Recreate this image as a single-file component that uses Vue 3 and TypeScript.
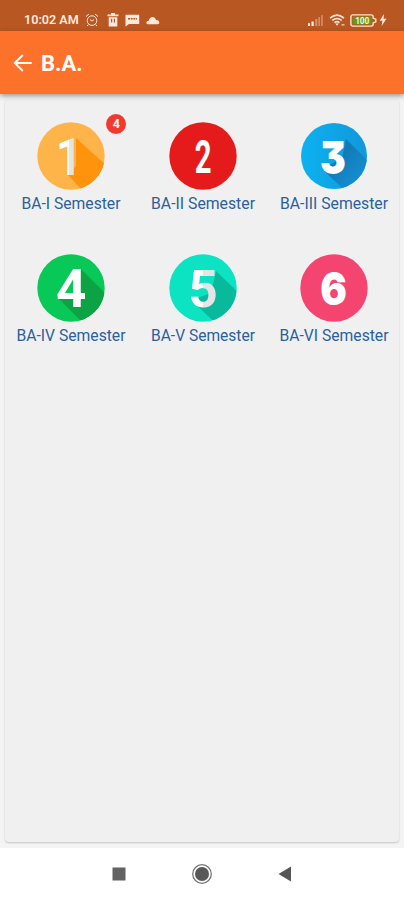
<script setup lang="ts">
interface Semester {
  digit: number
  label: string
  labelWidth: number
  color: string
  edge: string
  shade?: string
  shadow?: string
  size: number
  stretch: number
  x: number
  y: number
  font: string
  face?: string
  badge?: number
}

const semesters: Semester[] = [
  { digit: 1, label: 'BA-I Semester', labelWidth: 99, color: '#ffb44a', edge: '#ffb44a', shade: '#ff930c', shadow: 'M39 16L80 53L55 79L31 53L39 44Z', size: 52, stretch: 0.88, x: 31.8, y: 52.7, font: 'roboto', face: '#e5e4e3', badge: 4 },
  { digit: 2, label: 'BA-II Semester', labelWidth: 104, color: '#e51a1b', edge: '#e51a1b', size: 46.5, stretch: 0.63, x: 34.2, y: 50.8, font: 'roboto' },
  { digit: 3, label: 'BA-III Semester', labelWidth: 108, color: '#0cb2f0', edge: '#1297da', shade: '#1479b7', shadow: 'M46 17L78 49L54 77L22 47L42 36Z', size: 46, stretch: 0.84, x: 33, y: 51.5, font: 'inter' },
  { digit: 4, label: 'BA-IV Semester', labelWidth: 109, color: '#08c957', edge: '#08c957', shade: '#0ba344', shadow: 'M44 15L78 49L56 79L20 43L43 43Z', size: 53, stretch: 1, x: 34.3, y: 53, font: 'roboto' },
  { digit: 5, label: 'BA-V Semester', labelWidth: 104, color: '#0ce3c2', edge: '#0ce3c2', shade: '#08b99b', shadow: 'M47 17L79 48L57 79L22 46L42 39Z', size: 52, stretch: 0.98, x: 34, y: 52.5, font: 'roboto', face: '#e5e5e6' },
  { digit: 6, label: 'BA-VI Semester', labelWidth: 109, color: '#f3456f', edge: '#f3456f', size: 45, stretch: 0.88, x: 33.5, y: 51, font: 'inter' },
]
</script>

<template>
  <div class="screen">
    <header class="status">
      <div class="status-left">
        <span class="time">10:02 AM</span>
        <svg class="alarm" width="14" height="14" viewBox="0 0 14 14" fill="none" stroke="currentColor">
          <circle cx="7" cy="7.6" r="4.8" />
          <path d="M1 3.5L4 1M13 3.5L10 1M5 6.6L7 8.1L9 6.6M3.4 11.5L2.2 13M10.6 11.5L11.8 13" />
        </svg>
        <svg class="trash" width="12" height="14" viewBox="0 0 12 14" fill="currentColor">
          <path d="M4 0H8V1.5H11.5V3.3H.5V1.5H4ZM1.7 4.2H10.3V13.4H1.7ZM4 5.8V9.5H5.2V5.8ZM6.8 5.8V9.5H8V5.8Z" fill-rule="evenodd" />
        </svg>
        <svg class="chat" width="15" height="13" viewBox="0 0 15 13">
          <path d="M.5.8H14.2V10H4L.5 12.5Z" fill="currentColor" />
          <path d="M3 4.8H12" stroke="#b95722" stroke-width="1.4" stroke-dasharray="2 .7" />
        </svg>
        <svg class="cloud" width="14" height="9" viewBox="0 0 14 9">
          <path d="M2.5 8.3C-.5 8.3-.2 4.8 2.8 4.8C3.2.3 8.8-.7 10 4C13.8 3.8 14.5 8.3 11.5 8.3Z" fill="currentColor" />
        </svg>
      </div>
      <div class="status-right">
        <svg width="17" height="13" viewBox="0 0 17 13" fill="currentColor">
          <path d="M1 9.3H3V12H1ZM4.5 7.5H6.7V12H4.5Z" />
          <path d="M8.2 5H10.3V12H8.2ZM11.4 3H13V12H11.4ZM14.2 1H15.8V12H14.2Z" opacity=".38" />
        </svg>
        <svg class="wifi" width="17" height="13" viewBox="0 0 17 13" fill="none" stroke="currentColor">
          <path d="M1 4.1Q8-1.7 15 4.1M3.3 6.4Q8 2.6 12.7 6.4M5.5 8.6Q8 6.6 10.5 8.6" stroke-width="1.6" />
          <path d="M6.3 9.6H9.7L8 11.7Z" fill="currentColor" stroke="none" />
          <path d="M12.5 10.8H15.5" stroke-width="1.6" opacity=".65" />
        </svg>
        <svg class="battery" width="27" height="13" viewBox="0 0 27 13">
          <path d="M3 .9H21Q23.2.9 23.2 3V4.2L25.8 5.2V7.8L23.2 8.8V10Q23.2 12.1 21 12.1H3Q.9 12.1.9 10V3Q.9.9 3 .9Z" fill="#b95722" stroke="#ffe3c7" stroke-width="1.4" />
          <rect x="2.8" y="2.7" width="18.7" height="7.6" rx="1" fill="#4da322" />
          <text x="12.2" y="9.5" text-anchor="middle" class="charge">100</text>
        </svg>
        <svg class="bolt" width="8" height="12" viewBox="0 0 8 12"><path d="M5 0L.7 6.7H3.5L2.6 12L7.5 4.8H4.5Z" fill="currentColor" /></svg>
      </div>
    </header>

    <div class="appbar">
      <svg width="20" height="20" viewBox="0 0 20 20" fill="none" stroke="#fff" stroke-width="1.9"><path d="M18.7 10H2M9.8 2L1.8 10L9.8 18" /></svg>
      <h1>B.A.</h1>
    </div>

    <main>
      <section class="card">
        <article v-for="item in semesters" :key="item.digit" class="semester">
          <div class="icon">
            <svg width="68" height="68" viewBox="0 0 68 68">
              <defs>
                <clipPath :id="`disc-${item.digit}`"><circle cx="34" cy="34" :r="item.digit === 3 ? 33 : 33.7" /></clipPath>
                <linearGradient :id="`fill-${item.digit}`"><stop offset="0" :stop-color="item.color" /><stop offset="1" :stop-color="item.edge" /></linearGradient>
                <linearGradient :id="`shade-${item.digit}`" x1="0.3" y1="0.3" x2="0.8" y2="0.8"><stop offset="0" :stop-color="item.shade || item.color" /><stop offset="1" :stop-color="item.digit === 3 ? item.edge : item.shade || item.color" /></linearGradient>
                <linearGradient :id="`face-${item.digit}`" gradientUnits="userSpaceOnUse" x1="-34" x2="34">
                  <stop offset=".5" stop-color="#fff" /><stop offset=".5" :stop-color="item.face || '#fff'" />
                </linearGradient>
              </defs>
              <g :clip-path="`url(#disc-${item.digit})`">
                <rect width="68" height="68" :fill="`url(#fill-${item.digit})`" />
                <path v-if="item.shadow" :d="item.shadow" :fill="`url(#shade-${item.digit})`" />
              </g>
              <text :class="['digit', item.font]" :transform="`translate(${item.x} ${item.y}) scale(${item.stretch} 1)`" :font-size="item.size" :fill="`url(#face-${item.digit})`" text-anchor="middle">{{ item.digit }}</text>
            </svg>
            <span v-if="item.badge" class="badge">{{ item.badge }}</span>
          </div>
          <svg class="label" width="126" height="22" viewBox="0 0 126 22">
            <text x="63" y="16.5" text-anchor="middle" :textLength="item.labelWidth" lengthAdjust="spacingAndGlyphs">{{ item.label }}</text>
          </svg>
        </article>
      </section>
    </main>

    <nav>
      <svg width="14" height="14" viewBox="0 0 14 14"><rect x=".5" y=".5" width="13" height="13" fill="#626262" /></svg>
      <svg width="22" height="22" viewBox="0 0 22 22"><circle cx="11" cy="11" r="9.3" fill="none" stroke="#777" stroke-width="1.3" /><circle cx="11" cy="11" r="7" fill="#585858" /></svg>
      <svg width="14" height="16" viewBox="0 0 14 16"><path d="M.5 8L13 .5V15.5Z" fill="#555" /></svg>
    </nav>
  </div>
</template>

<style>
body { margin: 0; background: #fff; }
</style>

<style scoped>
* { box-sizing: border-box; }
svg { display: block; flex: none; }
.screen { width: 404px; height: 900px; display: flex; flex-direction: column; overflow: hidden; font-family: Roboto, sans-serif; background: #fff; }
.status { height: 31px; flex: none; display: flex; justify-content: space-between; padding: 9px 17px 0 24px; background: #b95722; color: #ffe9dc; }
.status-left, .status-right { display: flex; align-items: center; height: 22px; }
.time { width: 56px; font-size: 12.6px; font-weight: 600; line-height: 22px; white-space: nowrap; }
.alarm { margin-left: 5px; }
.trash { margin-left: 8px; }
.chat { margin-left: 6px; }
.cloud { margin-left: 6px; }
.wifi { margin-left: 5px; }
.battery { margin-left: 4px; }
.bolt { margin-left: 2px; }
.charge { font: bold 8.2px Roboto, sans-serif; fill: #fff0d9; }
.appbar { height: 63px; flex: none; display: flex; align-items: center; padding-left: 13px; background: #fc722a; box-shadow: 0 2px 5px rgba(0, 0, 0, .38); position: relative; }
h1 { margin: 2px 0 0 8px; color: #fff; font-size: 22px; line-height: 28px; font-weight: 700; }
main { height: 754px; flex: none; padding: 5px 6px 6px; background: #f4f4f4; }
.card { height: 743px; display: grid; grid-template-columns: repeat(3, 131.8px); grid-auto-rows: 132.3px; align-content: start; padding-top: 28px; margin-left: -1px; margin-right: -1px; border-radius: 4px; background: #f0f0f0; box-shadow: 0 1px 2px rgba(0, 0, 0, .2); }
.semester { display: flex; flex-direction: column; align-items: center; }
.icon { width: 68px; height: 68px; margin-top: -5px; position: relative; }
.digit { font-weight: 700; }
.roboto { font-family: Roboto, sans-serif; }
.inter { font-family: Inter, sans-serif; font-weight: 900; font-feature-settings: 'cv09' 1; }
.badge { position: absolute; left: 69.5px; top: -8px; width: 20px; height: 20px; border-radius: 50%; background: #f13a2d; color: #fff; text-align: center; font-size: 12.5px; font-weight: 700; line-height: 20px; }
.label { margin-top: 2px; font-family: Roboto, sans-serif; font-size: 15.8px; fill: #2c609d; }
nav { height: 52px; display: flex; align-items: center; justify-content: space-between; padding: 0 112px 0 112px; }
</style>
